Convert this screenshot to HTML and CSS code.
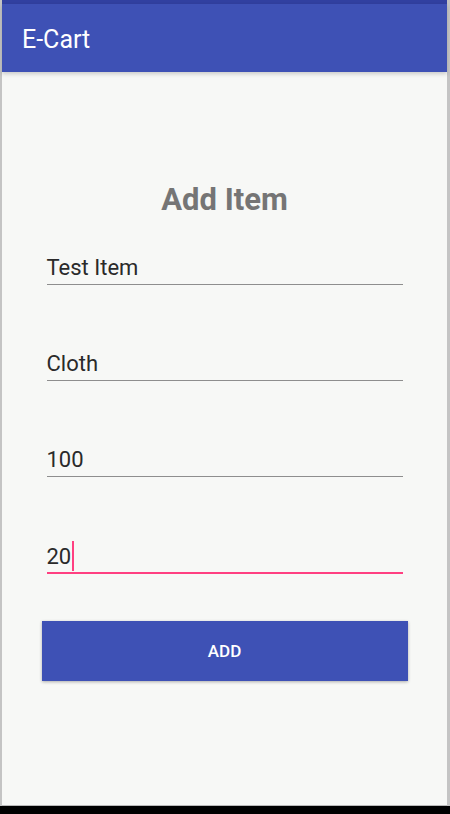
FILE: index.html
```html
<!DOCTYPE html>
<html>
<head>
<meta charset="utf-8">
<link rel="stylesheet" href="styles.css">
</head>
<body>
<div class="device">
  <div class="screen">
    <div class="status-bar"></div>
    <header class="toolbar"><span class="toolbar-title">E-Cart</span></header>
    <main class="content">
      <h1 class="heading">Add Item</h1>
      <div class="form">
        <div class="field">Test Item</div>
        <div class="field">Cloth</div>
        <div class="field">100</div>
        <div class="field field-focused">20<span class="caret"></span></div>
      </div>
      <button class="add-button">ADD</button>
    </main>
  </div>
  <div class="nav-bar"></div>
</div>
</body>
</html>
```
FILE: styles.css
```css
html, body {
  margin: 0;
  padding: 0;
}
body {
  width: 450px;
  height: 814px;
  overflow: hidden;
  background: #c4c4c4;
  font-family: Roboto, "Noto Sans", sans-serif;
}
.device {
  display: flex;
  flex-direction: column;
  height: 814px;
}
.screen {
  flex: 1;
  display: flex;
  flex-direction: column;
  margin-left: 2px;
  width: 445px;
  border-bottom: 1px solid #b9b9b9;
  background: #f7f8f6;
}
.status-bar {
  height: 4px;
  background: #3140a0;
}
.toolbar {
  height: 68px;
  background: #3e51b5;
  display: flex;
  align-items: center;
  padding-left: 20px;
  box-shadow: 0 2px 4px rgba(0,0,0,0.18);
  position: relative;
  z-index: 1;
}
.toolbar-title {
  color: #ffffff;
  font-size: 25px;
  font-weight: 400;
  margin-top: 2px;
}
.content {
  flex: 1;
  display: flex;
  flex-direction: column;
  align-items: center;
}
.heading {
  margin: 112px 0 0 0;
  font-size: 31px;
  line-height: 32px;
  font-weight: 700;
  color: #757575;
  text-align: center;
}
.form {
  width: 356px;
  margin-top: 39px;
  display: flex;
  flex-direction: column;
  gap: 66px;
}
.field {
  font-size: 22px;
  line-height: 26px;
  color: #2a2a2a;
  padding-bottom: 3px;
  border-bottom: 1px solid #8e8e8e;
  display: flex;
  align-items: center;
}
.field-focused {
  padding-bottom: 1px;
  border-bottom: 2px solid #ff4081;
}
.caret {
  display: inline-block;
  width: 2px;
  height: 30px;
  background: #ff4081;
  margin-left: 1px;
  margin-top: -2px;
}
.add-button {
  margin-top: 47px;
  width: 366px;
  height: 60px;
  border: none;
  background: #3e51b5;
  color: #ffffff;
  font-family: Roboto, "Noto Sans", sans-serif;
  font-size: 17px;
  font-weight: 500;
  box-shadow: 0 1px 3px rgba(0,0,0,0.3);
  padding: 0;
}
.nav-bar {
  height: 8px;
  background: #000000;
}
```
